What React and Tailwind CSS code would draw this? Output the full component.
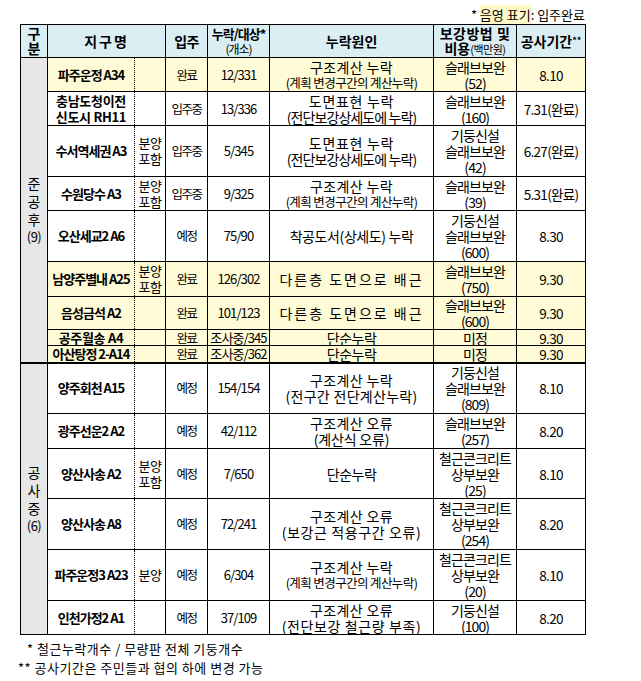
import React from "react";

const YEL = "bg-[#fffbd6]";

const rows = [
  { name: ["파주운정 A34"], sale: [], occ: "완료", cnt: "12/331", cause: [["구조계산 누락", "tracking-[0.4px]"], ["(계획 변경구간의 계산누락)", "text-[12.5px] tracking-[-0.6px]"]], fix: ["슬래브보완", "(52)"], period: "8.10", y: true, h: "h-[34px]" },
  { name: ["충남도청이전", "신도시 RH11"], nameCls: "tracking-[-0.3px]", sale: [], occ: "입주중", cnt: "13/336", cause: [["도면표현 누락", "tracking-[0.7px]"], ["(전단보강상세도에 누락)", "tracking-[-0.9px]"]], fix: ["슬래브보완", "(160)"], period: "7.31(완료)", h: "h-[34px]" },
  { name: ["수서역세권 A3"], sale: ["분양", "포함"], occ: "입주중", cnt: "5/345", cause: [["도면표현 누락", "tracking-[0.7px]"], ["(전단보강상세도에 누락)", "tracking-[-0.9px]"]], fix: ["기둥신설", "슬래브보완", "(42)"], period: "6.27(완료)", h: "h-[51px]" },
  { name: ["수원당수 A3"], sale: ["분양", "포함"], occ: "입주중", cnt: "9/325", cause: [["구조계산 누락", "tracking-[0.4px]"], ["(계획 변경구간의 계산누락)", "text-[12.5px] tracking-[-0.6px]"]], fix: ["슬래브보완", "(39)"], period: "5.31(완료)", h: "h-[34px]" },
  { name: ["오산세교2 A6"], sale: [], occ: "예정", cnt: "75/90", cause: [["착공도서(상세도) 누락", "tracking-[-0.4px]"]], fix: ["기둥신설", "슬래브보완", "(600)"], period: "8.30", h: "h-[51px]" },
  { name: ["남양주별내 A25"], sale: ["분양", "포함"], occ: "완료", cnt: "126/302", cause: [["다른층 도면으로 배근", "tracking-[2px]"]], fix: ["슬래브보완", "(750)"], period: "9.30", y: true, h: "h-[35px]" },
  { name: ["음성금석 A2"], sale: [], occ: "완료", cnt: "101/123", cause: [["다른층 도면으로 배근", "tracking-[2px]"]], fix: ["슬래브보완", "(600)"], period: "9.30", y: true, h: "h-[33px]" },
  { name: ["공주월송 A4"], nameCls: "tracking-[-0.3px] font-semibold", sale: [], occ: "완료", cnt: "조사중/345", cause: [["단순누락", "tracking-[-0.5px]"]], fix: ["미정"], period: "9.30", y: true, h: "h-[16px]", tight: true },
  { name: ["아산탕정 2-A14"], sale: [], occ: "완료", cnt: "조사중/362", cause: [["단순누락", "tracking-[-0.5px]"]], fix: ["미정"], period: "9.30", y: true, h: "h-[17px]", tight: true },
  { name: ["양주회천 A15"], sale: [], occ: "예정", cnt: "154/154", cause: [["구조계산 누락", "tracking-[0.4px]"], ["(전구간 전단계산누락)", "tracking-[0.3px]"]], fix: ["기둥신설", "슬래브보완", "(809)"], period: "8.10", h: "h-[51px]", first2: true },
  { name: ["광주선운2 A2"], sale: [], occ: "예정", cnt: "42/112", cause: [["구조계산 오류", "tracking-[0.4px]"], ["(계산식 오류)", "tracking-[-0.2px]"]], fix: ["슬래브보완", "(257)"], period: "8.20", h: "h-[35px]" },
  { name: ["양산사송 A2"], sale: ["분양", "포함"], occ: "예정", cnt: "7/650", cause: [["단순누락", "tracking-[-0.5px]"]], fix: ["철근콘크리트", "상부보완", "(25)"], period: "8.10", h: "h-[50px]" },
  { name: ["양산사송 A8"], sale: [], occ: "예정", cnt: "72/241", cause: [["구조계산 오류", "tracking-[0.4px]"], ["(보강근 적용구간 오류)", "tracking-[0.6px]"]], fix: ["철근콘크리트", "상부보완", "(254)"], period: "8.20", h: "h-[51px]" },
  { name: ["파주운정3 A23"], sale: ["분양"], occ: "예정", cnt: "6/304", cause: [["구조계산 누락", "tracking-[0.4px]"], ["(계획 변경구간의 계산누락)", "text-[12.5px] tracking-[-0.6px]"]], fix: ["철근콘크리트", "상부보완", "(20)"], period: "8.10", h: "h-[51px]" },
  { name: ["인천가정2 A1"], sale: [], occ: "예정", cnt: "37/109", cause: [["구조계산 오류", "tracking-[0.4px]"], ["(전단보강 철근량 부족)", "tracking-[0.6px]"]], fix: ["기둥신설", "(100)"], period: "8.20", h: "h-[34px]" },
];

const B = "border border-black";

function Lines({ items, cls = "", lh }) {
  return (
    <>
      {items.map((t, i) => (
        <div key={i} className={`${lh} whitespace-nowrap ${cls}`}>{t}</div>
      ))}
    </>
  );
}

function Group({ chars }) {
  return (
    <div className="flex flex-col items-center text-[14px] leading-[18px]">
      {chars.map((c, i) => (
        <div key={i} className={c.length > 1 ? "text-[13px] tracking-[-0.5px]" : ""}>{c}</div>
      ))}
    </div>
  );
}

export default function App() {
  return (
    <div className="w-[641px] h-[681px] bg-white text-black font-['Noto_Sans_CJK_KR',sans-serif] leading-[16px]">
      <div className="ml-[20px] w-[565px]">
        <div className="pt-[6px] h-[24px] flex justify-end text-[13px] leading-[18px] whitespace-nowrap">
          <span>* <span className="bg-[#fff8c8]">음영 표기</span>: 입주완료</span>
        </div>
        <table className="table-fixed border-collapse w-[565px]">
          <colgroup>
            <col className="w-[27px]" />
            <col className="w-[87px]" />
            <col className="w-[31px]" />
            <col className="w-[42px]" />
            <col className="w-[62px]" />
            <col className="w-[164px]" />
            <col className="w-[83px]" />
            <col className="w-[69px]" />
          </colgroup>
          <thead>
            <tr className="h-[33px] bg-[#daeef3]">
              <th className={`${B} p-0 font-bold text-[14px] leading-[15px]`}>
                <div>구</div>
                <div>분</div>
              </th>
              <th colSpan={2} className={`${B} p-0 font-bold text-[14px] leading-[16px] tracking-[2px]`}>지구명</th>
              <th className={`${B} p-0 font-bold text-[14px] leading-[16px] tracking-[-0.5px]`}>입주</th>
              <th className={`${B} p-0 font-normal`}>
                <div className="text-[13px] leading-[15px] font-semibold tracking-[-1px] whitespace-nowrap">누락/대상*</div>
                <div className="text-[12px] leading-[15px] tracking-[-1px]">(개소)</div>
              </th>
              <th className={`${B} p-0 font-bold text-[14px] leading-[16px]`}>누락원인</th>
              <th className={`${B} p-0 font-bold`}>
                <div className="text-[14px] leading-[15px] tracking-[0.5px] whitespace-nowrap">보강방법 및</div>
                <div className="text-[14px] leading-[15px] whitespace-nowrap">비용<span className="text-[11px] font-normal tracking-[-0.5px]">(백만원)</span></div>
              </th>
              <th className={`${B} p-0 font-bold text-[14px] leading-[16px] whitespace-nowrap`}>
                공사기간<span className="text-[9px] align-top">**</span>
              </th>
            </tr>
          </thead>
          <tbody>
            {rows.map((r, i) => {
              const lh = r.tight ? "leading-[14px]" : "leading-[16px]";
              const top = r.first2 ? "border-t-2" : "";
              return (
                <tr key={i} className={`${r.h} ${r.y ? YEL : ""}`}>
                  {i === 0 && (
                    <td rowSpan={9} className={`${B} p-0 bg-[#e7e7e7] align-middle`}>
                      <Group chars={["준", "공", "후", "(9)"]} />
                    </td>
                  )}
                  {i === 9 && (
                    <td rowSpan={6} className={`${B} ${top} p-0 bg-[#e7e7e7] align-middle`}>
                      <Group chars={["공", "사", "중", "(6)"]} />
                    </td>
                  )}
                  <td className={`border-y border-l border-black ${top} p-0 text-center align-middle font-bold text-[13px] ${lh}`}>
                    <Lines items={r.name} cls={r.nameCls ?? "tracking-[-1px]"} lh={lh} />
                  </td>
                  <td className={`border-y border-r border-black ${top} [border-left:1px_dotted_black] p-0 text-center align-middle text-[13px] ${lh}`}>
                    <Lines items={r.sale} cls="tracking-[-0.5px]" lh={lh} />
                  </td>
                  <td className={`${B} ${top} p-0 text-center align-middle text-[12.5px] tracking-[-1.5px] whitespace-nowrap ${lh}`}>{r.occ}</td>
                  <td className={`${B} ${top} p-0 text-center align-middle text-[13px] tracking-[-0.9px] whitespace-nowrap ${lh}`}>{r.cnt}</td>
                  <td className={`${B} ${top} p-0 text-center align-middle text-[14px] ${lh}`}>
                    {r.cause.map(([t, c], k) => (
                      <div key={k} className={`${lh} whitespace-nowrap ${c}`}>{t}</div>
                    ))}
                  </td>
                  <td className={`${B} ${top} p-0 text-center align-middle text-[14px] tracking-[-0.9px] ${lh}`}>
                    <Lines items={r.fix} lh={lh} />
                  </td>
                  <td className={`${B} ${top} p-0 text-center align-middle text-[13.5px] tracking-[-0.7px] whitespace-nowrap ${lh}`}>{r.period}</td>
                </tr>
              );
            })}
          </tbody>
        </table>
      </div>
      <div className="mt-[4px] text-[13px] leading-[19px] tracking-[0.5px] whitespace-nowrap">
        <div className="pl-[27px]">* 철근누락개수 / 무량판 전체 기둥개수</div>
        <div className="pl-[18px]">** 공사기간은 주민들과 협의 하에 변경 가능</div>
      </div>
    </div>
  );
}
